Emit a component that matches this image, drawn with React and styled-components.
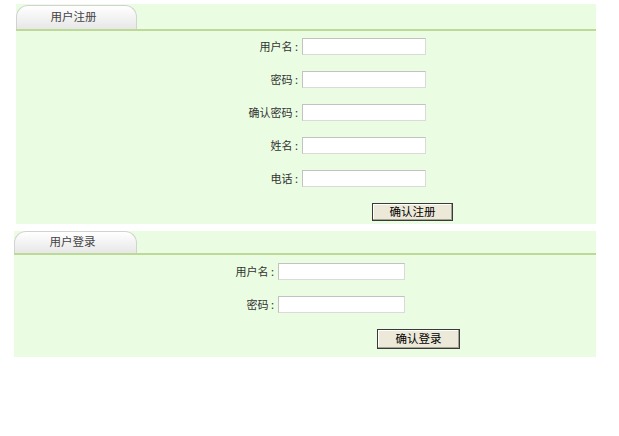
import React from 'react';
import styled, { createGlobalStyle } from 'styled-components';

const GlobalStyle = createGlobalStyle`
    body {
        margin: 0;
        background: #ffffff;
        font-family: "Noto Sans CJK SC", "Liberation Sans", sans-serif;
    }
`;

const Page = styled.div`
    display: flex;
    flex-direction: column;
    gap: 7px;
    padding-top: 4px;
`;

const Panel = styled.section`
    margin-left: ${props => props.$left}px;
    width: ${props => props.$width}px;
    background: #eafde2;
`;

const Header = styled.div`
    display: flex;
    align-items: flex-end;
    height: ${props => props.$height}px;
    border-bottom: 2px solid #bcda95;
`;

const Tab = styled.div`
    box-sizing: border-box;
    width: ${props => props.$width}px;
    height: ${props => props.$height}px;
    padding-right: 6px;
    border: 1px solid #d2d2d2;
    border-bottom: none;
    border-radius: 12px 12px 0 0;
    background: linear-gradient(#ffffff, #e7e7e7);
    color: #444;
    font-size: 11.5px;
    line-height: ${props => props.$height - 3}px;
    text-align: center;
`;

const Form = styled.form`
    display: grid;
    grid-template-columns: ${props => props.$labelWidth}px ${props => props.$inputWidth}px;
    column-gap: 1px;
    row-gap: 16px;
    align-items: center;
    padding: ${props => props.$top}px 0 ${props => props.$bottom}px;
    margin: 0;
`;

const Label = styled.label`
    padding-right: 3px;
    color: #333;
    font-size: 11px;
    line-height: 17px;
    text-align: right;
`;

const Input = styled.input`
    box-sizing: border-box;
    width: 100%;
    height: 17px;
    margin: 0;
    padding: 0 2px;
    border: 1px solid;
    border-color: #c2c2c2 #dadada #dadada #c2c2c2;
    background: #fff;
    font-size: 11px;
`;

const ButtonRow = styled.div`
    grid-column: 2;
    display: flex;
`;

const Button = styled.button`
    box-sizing: border-box;
    flex: none;
    margin-left: ${props => props.$offset}px;
    width: ${props => props.$width}px;
    height: ${props => props.$height}px;
    padding: 0;
    border: 1px solid #3a3a3a;
    box-shadow: inset -1px -1px 0 #a6a295, inset 1px 1px 0 #ffffff;
    background: #ece9d8;
    color: #000;
    font-family: inherit;
    font-size: 11.5px;
    line-height: 1;
`;

const registerFields = ['用户名', '密码', '确认密码', '姓名', '电话'];
const loginFields = ['用户名', '密码'];

const Fields = ({ names, prefix }) =>
    names.map(name => (
        <React.Fragment key={prefix + name}>
            <Label>{name} :</Label>
            <Input type={name.includes('密码') ? 'password' : 'text'} />
        </React.Fragment>
    ));

const App = () => {
    return (
        <React.Fragment>
            <GlobalStyle />
            <Page>
                <Panel $left={16} $width={580}>
                    <Header $height={25}>
                        <Tab $width={121} $height={24}>用户注册</Tab>
                    </Header>
                    <Form $labelWidth={285} $inputWidth={124} $top={7} $bottom={3}>
                        <Fields names={registerFields} prefix="reg-" />
                        <ButtonRow>
                            <Button type="button" $offset={70} $width={81} $height={18}>确认注册</Button>
                        </ButtonRow>
                    </Form>
                </Panel>

                <Panel $left={14} $width={582}>
                    <Header $height={22}>
                        <Tab $width={123} $height={22}>用户登录</Tab>
                    </Header>
                    <Form $labelWidth={263} $inputWidth={127} $top={8} $bottom={8}>
                        <Fields names={loginFields} prefix="login-" />
                        <ButtonRow>
                            <Button type="button" $offset={99} $width={83} $height={20}>确认登录</Button>
                        </ButtonRow>
                    </Form>
                </Panel>
            </Page>
        </React.Fragment>
    );
};

export default App;
